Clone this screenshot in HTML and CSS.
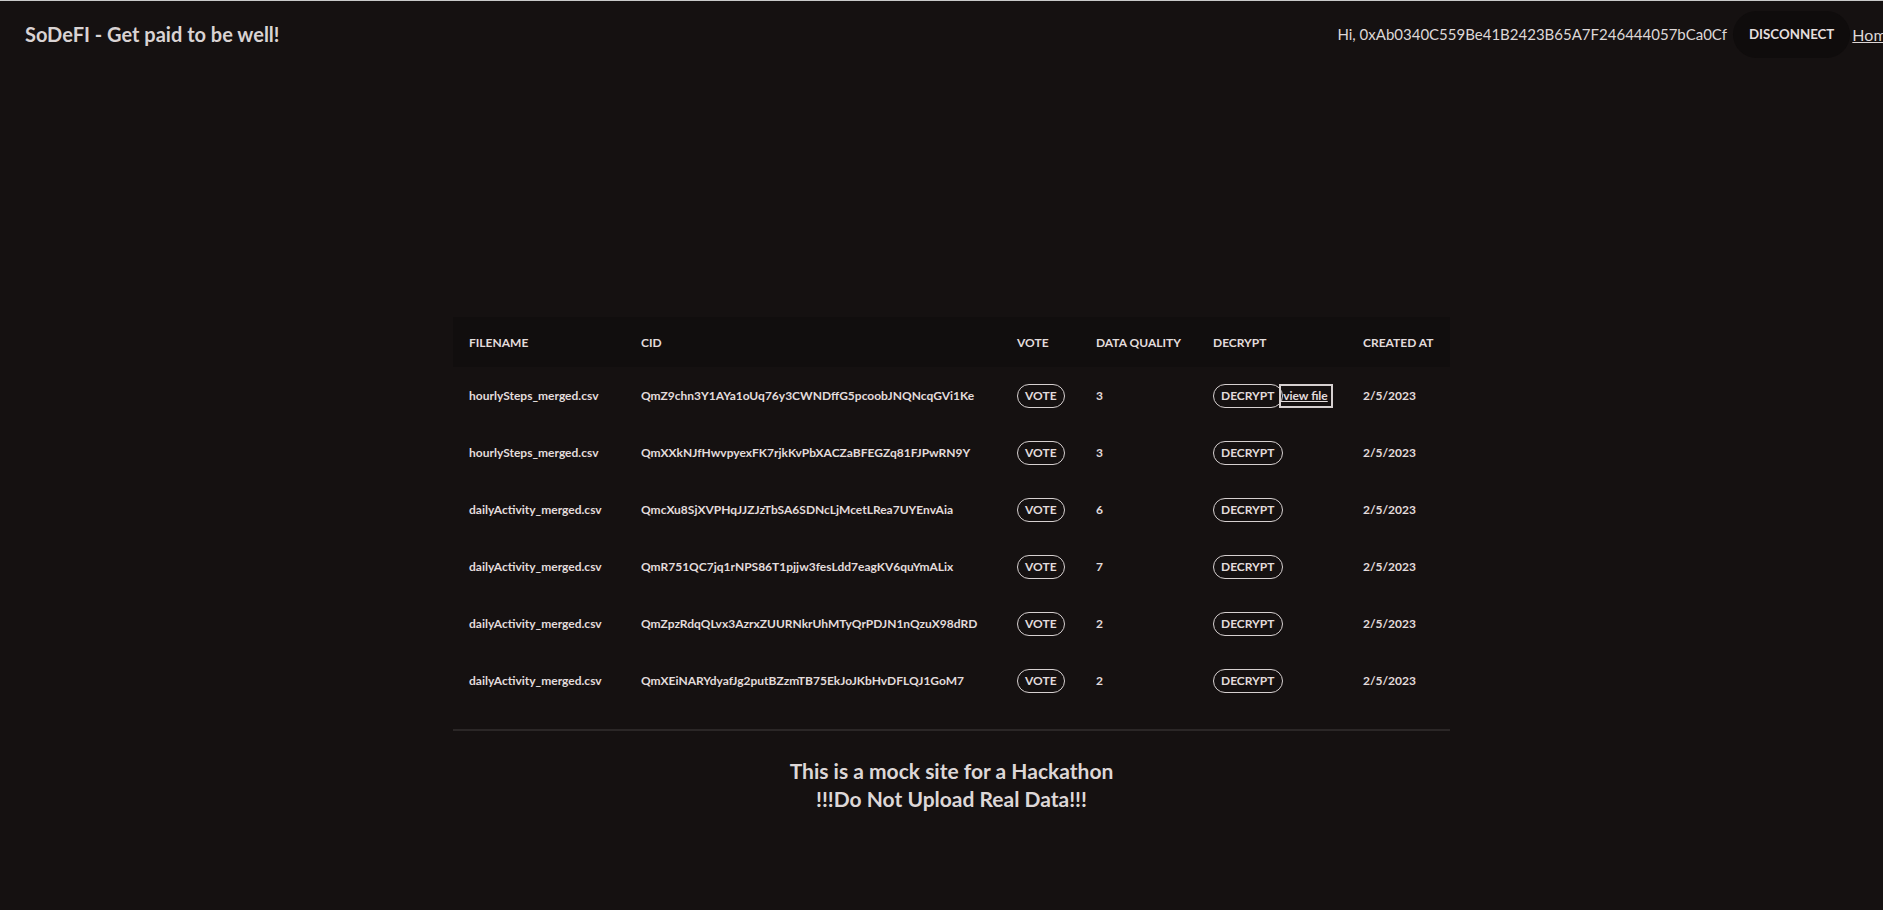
FILE: index.html
```html
<!DOCTYPE html>
<html lang="en">
<head>
<meta charset="utf-8">
<title>SoDeFI</title>
<link rel="stylesheet" href="styles.css">
</head>
<body>
<header class="nav">
  <div class="brand">SoDeFI - Get paid to be well!</div>
  <div class="nav-right">
    <span class="greet">Hi, 0xAb0340C559Be41B2423B65A7F246444057bCa0Cf</span>
    <button class="disconnect">DISCONNECT</button>
    <a class="home" href="#">Home</a>
  </div>
</header>
<main class="main">
  <div class="wrap">
    <table class="files">
      <colgroup>
        <col class="c-name"><col class="c-cid"><col class="c-vote"><col class="c-dq"><col class="c-dec"><col class="c-date">
      </colgroup>
      <thead>
        <tr><th>FILENAME</th><th>CID</th><th>VOTE</th><th>DATA QUALITY</th><th>DECRYPT</th><th>CREATED AT</th></tr>
      </thead>
      <tbody>
        <tr><td>hourlySteps_merged.csv</td><td>QmZ9chn3Y1AYa1oUq76y3CWNDffG5pcoobJNQNcqGVi1Ke</td><td><button class="pill">VOTE</button></td><td>3</td><td class="dec"><button class="pill">DECRYPT</button><a class="view" href="#">&nbsp;view file</a></td><td>2/5/2023</td></tr>
        <tr><td>hourlySteps_merged.csv</td><td>QmXXkNJfHwvpyexFK7rjkKvPbXACZaBFEGZq81FJPwRN9Y</td><td><button class="pill">VOTE</button></td><td>3</td><td class="dec"><button class="pill">DECRYPT</button></td><td>2/5/2023</td></tr>
        <tr><td>dailyActivity_merged.csv</td><td>QmcXu8SjXVPHqJJZJzTbSA6SDNcLjMcetLRea7UYEnvAia</td><td><button class="pill">VOTE</button></td><td>6</td><td class="dec"><button class="pill">DECRYPT</button></td><td>2/5/2023</td></tr>
        <tr><td>dailyActivity_merged.csv</td><td>QmR751QC7jq1rNPS86T1pjjw3fesLdd7eagKV6quYmALix</td><td><button class="pill">VOTE</button></td><td>7</td><td class="dec"><button class="pill">DECRYPT</button></td><td>2/5/2023</td></tr>
        <tr><td>dailyActivity_merged.csv</td><td>QmZpzRdqQLvx3AzrxZUURNkrUhMTyQrPDJN1nQzuX98dRD</td><td><button class="pill">VOTE</button></td><td>2</td><td class="dec"><button class="pill">DECRYPT</button></td><td>2/5/2023</td></tr>
        <tr><td>dailyActivity_merged.csv</td><td>QmXEiNARYdyafJg2putBZzmTB75EkJoJKbHvDFLQJ1GoM7</td><td><button class="pill">VOTE</button></td><td>2</td><td class="dec"><button class="pill">DECRYPT</button></td><td>2/5/2023</td></tr>
      </tbody>
    </table>
    <hr class="rule">
    <footer class="note">
      <p>This is a mock site for a Hackathon</p>
      <p>!!!Do Not Upload Real Data!!!</p>
    </footer>
  </div>
</main>
</body>
</html>
```
FILE: styles.css
```css
html, body {
  margin: 0;
  padding: 0;
  background: #151111;
  color: #ddd7d7;
  font-family: Lato, "Noto Sans", sans-serif;
  overflow: hidden;
}
body {
  height: 910px;
  border-top: 1px solid #c9c9c9;
  box-sizing: border-box;
}
.nav {
  display: flex;
  align-items: center;
  justify-content: space-between;
  height: 66px;
  padding-left: 25px;
  box-sizing: border-box;
}
.brand {
  font-size: 20px;
  font-weight: 700;
  color: #d9d3d3;
}
.nav-right {
  display: flex;
  align-items: center;
  flex-shrink: 0;
  margin-right: -12px;
}
.greet {
  font-size: 15px;
  color: #ddd7d7;
}
.disconnect {
  margin-left: 6px;
  height: 47px;
  padding: 0 16px;
  border: none;
  border-radius: 24px;
  background: #0f0c0c;
  color: #e4dede;
  font-family: inherit;
  font-weight: 700;
  font-size: 13.3px;
}
.home,
.home:link,
.home:visited {
  margin-left: 2px;
  font-size: 16px;
  color: #ddd7d7;
  text-decoration: underline;
}
.main {
  padding-left: 20px;
  padding-top: 250px;
}
.wrap {
  width: 997px;
  margin: 0 auto;
}
.files {
  width: 100%;
  border-collapse: collapse;
  table-layout: fixed;
  font-size: 12px;
  font-weight: 700;
}
.c-name { width: 172px; }
.c-cid { width: 376px; }
.c-vote { width: 79px; }
.c-dq { width: 117px; }
.c-dec { width: 150px; }
.c-date { width: 103px; }
.files thead tr {
  background: #110e0e;
  height: 50px;
}
.files th {
  text-align: left;
  padding: 0 0 0 16px;
  font-weight: 700;
  color: #e2dcdc;
}
.files td {
  height: 57px;
  padding: 0 0 0 16px;
  white-space: nowrap;
  color: #e2dcdc;
}
.dec {
  overflow: visible;
}
.pill {
  height: 24px;
  padding: 0 7px;
  border: 1px solid #d6d0d0;
  border-radius: 12px;
  background: transparent;
  color: #e2dcdc;
  font-family: inherit;
  font-size: 12px;
  font-weight: 700;
  vertical-align: middle;
}
.view,
.view:link,
.view:visited {
  display: inline-block;
  height: 24px;
  line-height: 20px;
  box-sizing: border-box;
  margin-left: -4px;
  padding-right: 3px;
  border: 2px solid #d6d0d0;
  color: #e2dcdc;
  text-decoration: underline;
  vertical-align: middle;
  font-size: 12px;
}
.rule {
  margin: 20px 0 0;
  border: none;
  height: 2px;
  background: #2b2727;
}
.note {
  text-align: center;
  font-size: 21px;
  font-weight: 700;
  line-height: 28px;
  padding-top: 26px;
  color: #ddd7d7;
}
.note p {
  margin: 0;
}
```
